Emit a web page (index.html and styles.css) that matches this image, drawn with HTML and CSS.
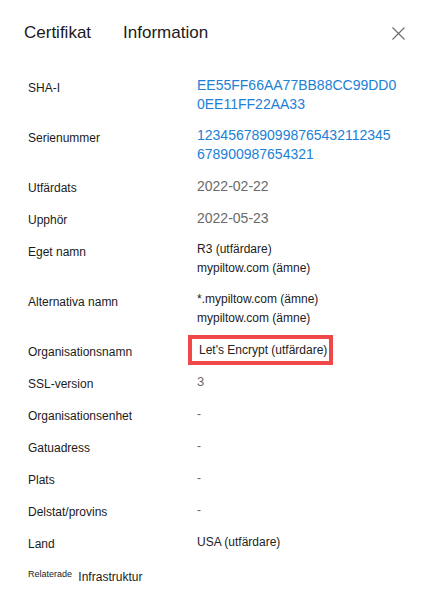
FILE: index.html
```html
<!DOCTYPE html>
<html lang="sv">
<head>
<meta charset="utf-8">
<title>Certifikat</title>
<link rel="stylesheet" href="styles.css">
</head>
<body>
<div class="panel">
  <header class="header">
    <span class="tab">Certifikat</span>
    <span class="tab">Information</span>
    <button class="close" aria-label="Stäng">
      <svg width="13" height="13" viewBox="0 0 13 13"><path d="M0.5 0.5 L12.5 12.5 M12.5 0.5 L0.5 12.5" stroke="#6b6b6b" stroke-width="1.1" fill="none"/></svg>
    </button>
  </header>
  <div class="list">
    <div class="row"><div class="label">SHA-I</div><div class="value link multi">EE55FF66AA77BB88CC99DD0<br>0EE11FF22AA33</div></div>
    <div class="row"><div class="label">Serienummer</div><div class="value link multi">1234567890998765432112345<br>678900987654321</div></div>
    <div class="row"><div class="label">Utfärdats</div><div class="value gray">2022-02-22</div></div>
    <div class="row"><div class="label">Upphör</div><div class="value gray">2022-05-23</div></div>
    <div class="row"><div class="label">Eget namn</div><div class="value dark multi">R3 (utfärdare)<br>mypiltow.com (ämne)</div></div>
    <div class="row"><div class="label">Alternativa namn</div><div class="value dark multi">*.mypiltow.com (ämne)<br>mypiltow.com (ämne)</div></div>
    <div class="row"><div class="label">Organisationsnamn</div><div class="value dark"><span class="highlight">Let's Encrypt (utfärdare)</span></div></div>
    <div class="row"><div class="label">SSL-version</div><div class="value gray big">3</div></div>
    <div class="row"><div class="label">Organisationsenhet</div><div class="value dash">-</div></div>
    <div class="row"><div class="label">Gatuadress</div><div class="value dash">-</div></div>
    <div class="row"><div class="label">Plats</div><div class="value dash">-</div></div>
    <div class="row"><div class="label">Delstat/provins</div><div class="value dash">-</div></div>
    <div class="row"><div class="label">Land</div><div class="value dark">USA (utfärdare)</div></div>
    <div class="row"><div class="label label-last"><span class="small">Relaterade</span> Infrastruktur</div><div class="value"></div></div>
  </div>
</div>
</body>
</html>
```

FILE: styles.css
```css
html, body {
  margin: 0;
  padding: 0;
  background: #ffffff;
}

body {
  font-family: "Liberation Sans", Arial, sans-serif;
  color: #1b1b1b;
  width: 427px;
}

.panel {
  width: 427px;
}

.header {
  display: flex;
  align-items: center;
  gap: 32px;
  padding: 21px 22px 0 24px;
  height: 24px;
}

.tab {
  font-size: 17px;
  line-height: 24px;
  color: #1a1a1a;
}

.close {
  margin-left: auto;
  border: 0;
  background: transparent;
  padding: 0;
  width: 13px;
  height: 13px;
  display: flex;
}

.list {
  display: flex;
  flex-direction: column;
  gap: 12px;
  padding: 31px 0 0 28px;
}

.row {
  display: grid;
  grid-template-columns: 169px 1fr;
  align-items: start;
}

.label {
  font-size: 12px;
  line-height: 20px;
  padding-top: 2px;
  margin-bottom: -2px;
  color: #1b1b1b;
  white-space: nowrap;
}

.label-last {
  padding-top: 0;
  margin-bottom: 0;
}

.small {
  font-size: 9px;
  vertical-align: 4px;
  margin-right: 3px;
}

.value {
  font-size: 12px;
  line-height: 20px;
  color: #222222;
  white-space: nowrap;
}

.value.multi {
  line-height: 19px;
}

.value.link {
  font-size: 14px;
  color: #2180d6;
}

.value.gray {
  font-size: 14px;
  color: #6a6a6a;
}

.value.big {
  font-size: 13px;
}

.value.dash {
  color: #666666;
}

.highlight {
  display: inline-block;
  border: 4px solid #f04848;
  padding: 1px 2px 1px 7px;
  margin: -5px 0 -5px -9px;
  line-height: 20px;
}
```
